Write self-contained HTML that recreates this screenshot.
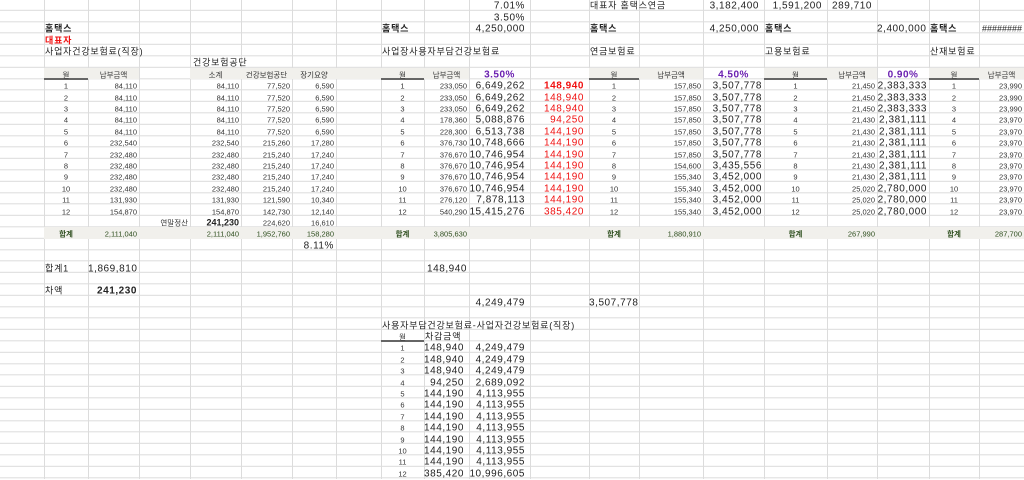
<!DOCTYPE html>
<html><head><meta charset="utf-8">
<style>
*{margin:0;padding:0;box-sizing:border-box}
body{width:1024px;height:479px;overflow:hidden;position:relative;background:#fff;
font-family:"Liberation Sans","Noto Sans CJK KR",sans-serif;color:#222;
background-image:repeating-linear-gradient(to bottom,transparent 0,transparent 10.4px,#dcdcdc 10.4px,#dcdcdc 11.4px);
background-position:0 -0.7px}
.v{position:absolute;top:0;height:479px;width:1px;background:#dcdcdc}
.g{position:absolute;height:11.4px;background:#f1f0ec}
.u{position:absolute;height:2px;background:#666}
i{font-style:normal;position:absolute;height:11.4px;line-height:11.4px;white-space:nowrap;font-size:10px;transform:translateY(1.5px)}
.r{text-align:right;padding-right:2px}
.rb{text-align:right;padding-right:5px}
.m{text-align:center}
.l{padding-left:1px}
.s{font-size:7.5px;color:#333}
.b{font-size:10px;letter-spacing:.55px;color:#222}
.red{color:#f01010}
.bold{font-weight:bold}
.grn{color:#2f4f1f}
.pur{color:#6a1fb0;font-weight:bold;font-size:10px;letter-spacing:.5px}
.k{font-size:9px;letter-spacing:.8px}
.c0{left:0;width:44px}.c1{left:44px;width:44px}.c2{left:88px;width:51px}.c3{left:139px;width:51px}
.c4{left:190px;width:51px}.c5{left:241px;width:51px}.c6{left:292px;width:44px}.c7{left:336px;width:45px}
.c8{left:381px;width:43px}.c9{left:424px;width:45px}.c10{left:469px;width:61px}.c11{left:530px;width:59px}
.c12{left:589px;width:50px}.c13{left:639px;width:64px}.c14{left:703px;width:61px}.c15{left:764px;width:63px}
.c16{left:827px;width:50px}.c17{left:877px;width:52px}.c18{left:929px;width:50px}.c19{left:979px;width:45px}
.y0{top:-0.7px}.y1{top:10.7px}.y2{top:22.1px}.y3{top:33.5px}.y4{top:44.9px}.y5{top:56.3px}.y6{top:67.7px}
.y7{top:79.1px}.y8{top:90.5px}.y9{top:101.9px}.y10{top:113.3px}.y11{top:124.7px}.y12{top:136.1px}
.y13{top:147.5px}.y14{top:158.9px}.y15{top:170.3px}.y16{top:181.7px}.y17{top:193.1px}.y18{top:204.5px}
.y19{top:215.9px}.y20{top:227.3px}.y21{top:238.7px}.y22{top:250.1px}.y23{top:261.5px}.y24{top:272.9px}
.y25{top:284.3px}.y26{top:295.7px}.y27{top:307.1px}.y28{top:318.5px}.y29{top:329.9px}.y30{top:341.3px}
.y31{top:352.7px}.y32{top:364.1px}.y33{top:375.5px}.y34{top:386.9px}.y35{top:398.3px}.y36{top:409.7px}
.y37{top:421.1px}.y38{top:432.5px}.y39{top:443.9px}.y40{top:455.3px}.y41{top:466.7px}
div.y6,div.y20{transform:none}
</style></head><body>
<div class="v" style="left:44px"></div><div class="v" style="left:88px"></div><div class="v" style="left:139px"></div>
<div class="v" style="left:190px"></div><div class="v" style="left:241px"></div><div class="v" style="left:292px"></div>
<div class="v" style="left:336px"></div><div class="v" style="left:381px"></div><div class="v" style="left:424px"></div>
<div class="v" style="left:469px"></div><div class="v" style="left:530px"></div><div class="v" style="left:589px"></div>
<div class="v" style="left:639px"></div><div class="v" style="left:703px"></div><div class="v" style="left:764px"></div>
<div class="v" style="left:827px"></div><div class="v" style="left:877px"></div><div class="v" style="left:929px"></div>
<div class="v" style="left:979px"></div>

<div class="g y6" style="left:44px;width:95px"></div>
<div class="g y6" style="left:190px;width:279px"></div>
<div class="g y6" style="left:589px;width:114px"></div>
<div class="g y6" style="left:764px;width:113px"></div>
<div class="g y6" style="left:929px;width:95px"></div>
<div class="g y20" style="left:44px;width:980px"></div>
<div class="u" style="top:77.5px;left:44px;width:44px"></div>
<div class="u" style="top:77.5px;left:381px;width:43px"></div>
<div class="u" style="top:77.5px;left:589px;width:50px"></div>
<div class="u" style="top:77.5px;left:764px;width:63px"></div>
<div class="u" style="top:77.5px;left:929px;width:50px"></div>
<div class="u" style="top:339.5px;left:381px;width:43px"></div>

<i class="c10 y0 rb b">7.01%</i>
<i class="c12 y0 l k">대표자 홈택스연금</i>
<i class="c14 y0 rb b">3,182,400</i>
<i class="c15 y0 rb b">1,591,200</i>
<i class="c16 y0 rb b">289,710</i>
<i class="c10 y1 rb b">3.50%</i>
<i class="c1 y2 l k bold">홈택스</i>
<i class="c8 y2 l k bold">홈택스</i>
<i class="c10 y2 rb b">4,250,000</i>
<i class="c12 y2 l k bold">홈택스</i>
<i class="c14 y2 rb b">4,250,000</i>
<i class="c15 y2 l k bold">홈택스</i>
<i class="c17 y2 rb b">2,400,000</i>
<i class="c18 y2 l k bold">홈택스</i>
<i class="c19 y2 r" style="font-size:9px">########</i>
<i class="c1 y3 l k bold red">대표자</i>
<i class="c1 y4 l k">사업자건강보험료(직장)</i>
<i class="c8 y4 l k">사업장사용자부담건강보험료</i>
<i class="c12 y4 l k">연금보험료</i>
<i class="c15 y4 l k">고용보험료</i>
<i class="c18 y4 l k">산재보험료</i>
<i class="c4 y5 l k" style="left:192px">건강보험공단</i>

<i class="c1 y6 m s">월</i><i class="c2 y6 m s">납부금액</i><i class="c4 y6 m s">소계</i><i class="c5 y6 m s">건강보험공단</i><i class="c6 y6 m s">장기요양</i>
<i class="c8 y6 m s">월</i><i class="c9 y6 m s">납부금액</i><i class="c10 y6 m pur">3.50%</i>
<i class="c12 y6 m s">월</i><i class="c13 y6 m s">납부금액</i><i class="c14 y6 m pur">4.50%</i>
<i class="c15 y6 m s">월</i><i class="c16 y6 m s">납부금액</i><i class="c17 y6 m pur">0.90%</i>
<i class="c18 y6 m s">월</i><i class="c19 y6 m s">납부금액</i>

<i class="c1 y7 m s">1</i><i class="c2 y7 r s">84,110</i><i class="c4 y7 r s">84,110</i><i class="c5 y7 r s">77,520</i><i class="c6 y7 r s">6,590</i>
<i class="c1 y8 m s">2</i><i class="c2 y8 r s">84,110</i><i class="c4 y8 r s">84,110</i><i class="c5 y8 r s">77,520</i><i class="c6 y8 r s">6,590</i>
<i class="c1 y9 m s">3</i><i class="c2 y9 r s">84,110</i><i class="c4 y9 r s">84,110</i><i class="c5 y9 r s">77,520</i><i class="c6 y9 r s">6,590</i>
<i class="c1 y10 m s">4</i><i class="c2 y10 r s">84,110</i><i class="c4 y10 r s">84,110</i><i class="c5 y10 r s">77,520</i><i class="c6 y10 r s">6,590</i>
<i class="c1 y11 m s">5</i><i class="c2 y11 r s">84,110</i><i class="c4 y11 r s">84,110</i><i class="c5 y11 r s">77,520</i><i class="c6 y11 r s">6,590</i>
<i class="c1 y12 m s">6</i><i class="c2 y12 r s">232,540</i><i class="c4 y12 r s">232,540</i><i class="c5 y12 r s">215,260</i><i class="c6 y12 r s">17,280</i>
<i class="c1 y13 m s">7</i><i class="c2 y13 r s">232,480</i><i class="c4 y13 r s">232,480</i><i class="c5 y13 r s">215,240</i><i class="c6 y13 r s">17,240</i>
<i class="c1 y14 m s">8</i><i class="c2 y14 r s">232,480</i><i class="c4 y14 r s">232,480</i><i class="c5 y14 r s">215,240</i><i class="c6 y14 r s">17,240</i>
<i class="c1 y15 m s">9</i><i class="c2 y15 r s">232,480</i><i class="c4 y15 r s">232,480</i><i class="c5 y15 r s">215,240</i><i class="c6 y15 r s">17,240</i>
<i class="c1 y16 m s">10</i><i class="c2 y16 r s">232,480</i><i class="c4 y16 r s">232,480</i><i class="c5 y16 r s">215,240</i><i class="c6 y16 r s">17,240</i>
<i class="c1 y17 m s">11</i><i class="c2 y17 r s">131,930</i><i class="c4 y17 r s">131,930</i><i class="c5 y17 r s">121,590</i><i class="c6 y17 r s">10,340</i>
<i class="c1 y18 m s">12</i><i class="c2 y18 r s">154,870</i><i class="c4 y18 r s">154,870</i><i class="c5 y18 r s">142,730</i><i class="c6 y18 r s">12,140</i>
<i class="c3 y19 r s">연말정산</i><i class="c4 y19 r bold" style="font-size:9px">241,230</i><i class="c5 y19 r s">224,620</i><i class="c6 y19 r s">16,610</i>
<i class="c1 y20 m s grn bold">합계</i><i class="c2 y20 r s grn">2,111,040</i><i class="c4 y20 r s grn">2,111,040</i><i class="c5 y20 r s grn">1,952,760</i><i class="c6 y20 r s grn">158,280</i>
<i class="c6 y21 r b">8.11%</i>
<i class="c1 y23 l k">합계1</i><i class="c2 y23 r b">1,869,810</i>
<i class="c1 y25 l k">차액</i><i class="c2 y25 r b bold">241,230</i>

<i class="c8 y7 m s">1</i><i class="c9 y7 r s">233,050</i><i class="c10 y7 rb b">6,649,262</i><i class="c11 y7 rb b red bold">148,940</i>
<i class="c8 y8 m s">2</i><i class="c9 y8 r s">233,050</i><i class="c10 y8 rb b">6,649,262</i><i class="c11 y8 rb b red">148,940</i>
<i class="c8 y9 m s">3</i><i class="c9 y9 r s">233,050</i><i class="c10 y9 rb b">6,649,262</i><i class="c11 y9 rb b red">148,940</i>
<i class="c8 y10 m s">4</i><i class="c9 y10 r s">178,360</i><i class="c10 y10 rb b">5,088,876</i><i class="c11 y10 rb b red">94,250</i>
<i class="c8 y11 m s">5</i><i class="c9 y11 r s">228,300</i><i class="c10 y11 rb b">6,513,738</i><i class="c11 y11 rb b red">144,190</i>
<i class="c8 y12 m s">6</i><i class="c9 y12 r s">376,730</i><i class="c10 y12 rb b">10,748,666</i><i class="c11 y12 rb b red">144,190</i>
<i class="c8 y13 m s">7</i><i class="c9 y13 r s">376,670</i><i class="c10 y13 rb b">10,746,954</i><i class="c11 y13 rb b red">144,190</i>
<i class="c8 y14 m s">8</i><i class="c9 y14 r s">376,670</i><i class="c10 y14 rb b">10,746,954</i><i class="c11 y14 rb b red">144,190</i>
<i class="c8 y15 m s">9</i><i class="c9 y15 r s">376,670</i><i class="c10 y15 rb b">10,746,954</i><i class="c11 y15 rb b red">144,190</i>
<i class="c8 y16 m s">10</i><i class="c9 y16 r s">376,670</i><i class="c10 y16 rb b">10,746,954</i><i class="c11 y16 rb b red">144,190</i>
<i class="c8 y17 m s">11</i><i class="c9 y17 r s">276,120</i><i class="c10 y17 rb b">7,878,113</i><i class="c11 y17 rb b red">144,190</i>
<i class="c8 y18 m s">12</i><i class="c9 y18 r s">540,290</i><i class="c10 y18 rb b">15,415,276</i><i class="c11 y18 rb b red">385,420</i>
<i class="c8 y20 m s grn bold">합계</i><i class="c9 y20 r s grn">3,805,630</i>
<i class="c9 y23 r b">148,940</i>
<i class="c10 y26 rb b">4,249,479</i>
<i class="c12 y26 r b">3,507,778</i>
<i class="c8 y28 l k">사용자부담건강보험료-사업자건강보험료(직장)</i>
<i class="c8 y29 m s">월</i><i class="c9 y29 l k">차감금액</i>
<i class="c8 y30 m s">1</i><i class="c9 y30 rb b">148,940</i><i class="c10 y30 rb b">4,249,479</i>
<i class="c8 y31 m s">2</i><i class="c9 y31 rb b">148,940</i><i class="c10 y31 rb b">4,249,479</i>
<i class="c8 y32 m s">3</i><i class="c9 y32 rb b">148,940</i><i class="c10 y32 rb b">4,249,479</i>
<i class="c8 y33 m s">4</i><i class="c9 y33 rb b">94,250</i><i class="c10 y33 rb b">2,689,092</i>
<i class="c8 y34 m s">5</i><i class="c9 y34 rb b">144,190</i><i class="c10 y34 rb b">4,113,955</i>
<i class="c8 y35 m s">6</i><i class="c9 y35 rb b">144,190</i><i class="c10 y35 rb b">4,113,955</i>
<i class="c8 y36 m s">7</i><i class="c9 y36 rb b">144,190</i><i class="c10 y36 rb b">4,113,955</i>
<i class="c8 y37 m s">8</i><i class="c9 y37 rb b">144,190</i><i class="c10 y37 rb b">4,113,955</i>
<i class="c8 y38 m s">9</i><i class="c9 y38 rb b">144,190</i><i class="c10 y38 rb b">4,113,955</i>
<i class="c8 y39 m s">10</i><i class="c9 y39 rb b">144,190</i><i class="c10 y39 rb b">4,113,955</i>
<i class="c8 y40 m s">11</i><i class="c9 y40 rb b">144,190</i><i class="c10 y40 rb b">4,113,955</i>
<i class="c8 y41 m s">12</i><i class="c9 y41 rb b">385,420</i><i class="c10 y41 rb b">10,996,605</i>

<i class="c12 y7 m s">1</i><i class="c13 y7 r s">157,850</i><i class="c14 y7 r b">3,507,778</i>
<i class="c12 y8 m s">2</i><i class="c13 y8 r s">157,850</i><i class="c14 y8 r b">3,507,778</i>
<i class="c12 y9 m s">3</i><i class="c13 y9 r s">157,850</i><i class="c14 y9 r b">3,507,778</i>
<i class="c12 y10 m s">4</i><i class="c13 y10 r s">157,850</i><i class="c14 y10 r b">3,507,778</i>
<i class="c12 y11 m s">5</i><i class="c13 y11 r s">157,850</i><i class="c14 y11 r b">3,507,778</i>
<i class="c12 y12 m s">6</i><i class="c13 y12 r s">157,850</i><i class="c14 y12 r b">3,507,778</i>
<i class="c12 y13 m s">7</i><i class="c13 y13 r s">157,850</i><i class="c14 y13 r b">3,507,778</i>
<i class="c12 y14 m s">8</i><i class="c13 y14 r s">154,600</i><i class="c14 y14 r b">3,435,556</i>
<i class="c12 y15 m s">9</i><i class="c13 y15 r s">155,340</i><i class="c14 y15 r b">3,452,000</i>
<i class="c12 y16 m s">10</i><i class="c13 y16 r s">155,340</i><i class="c14 y16 r b">3,452,000</i>
<i class="c12 y17 m s">11</i><i class="c13 y17 r s">155,340</i><i class="c14 y17 r b">3,452,000</i>
<i class="c12 y18 m s">12</i><i class="c13 y18 r s">155,340</i><i class="c14 y18 r b">3,452,000</i>
<i class="c12 y20 m s grn bold">합계</i><i class="c13 y20 r s grn">1,880,910</i>

<i class="c15 y7 m s">1</i><i class="c16 y7 r s">21,450</i><i class="c17 y7 r b">2,383,333</i>
<i class="c15 y8 m s">2</i><i class="c16 y8 r s">21,450</i><i class="c17 y8 r b">2,383,333</i>
<i class="c15 y9 m s">3</i><i class="c16 y9 r s">21,450</i><i class="c17 y9 r b">2,383,333</i>
<i class="c15 y10 m s">4</i><i class="c16 y10 r s">21,430</i><i class="c17 y10 r b">2,381,111</i>
<i class="c15 y11 m s">5</i><i class="c16 y11 r s">21,430</i><i class="c17 y11 r b">2,381,111</i>
<i class="c15 y12 m s">6</i><i class="c16 y12 r s">21,430</i><i class="c17 y12 r b">2,381,111</i>
<i class="c15 y13 m s">7</i><i class="c16 y13 r s">21,430</i><i class="c17 y13 r b">2,381,111</i>
<i class="c15 y14 m s">8</i><i class="c16 y14 r s">21,430</i><i class="c17 y14 r b">2,381,111</i>
<i class="c15 y15 m s">9</i><i class="c16 y15 r s">21,430</i><i class="c17 y15 r b">2,381,111</i>
<i class="c15 y16 m s">10</i><i class="c16 y16 r s">25,020</i><i class="c17 y16 r b">2,780,000</i>
<i class="c15 y17 m s">11</i><i class="c16 y17 r s">25,020</i><i class="c17 y17 r b">2,780,000</i>
<i class="c15 y18 m s">12</i><i class="c16 y18 r s">25,020</i><i class="c17 y18 r b">2,780,000</i>
<i class="c15 y20 m s grn bold">합계</i><i class="c16 y20 r s grn">267,990</i>

<i class="c18 y7 m s">1</i><i class="c19 y7 r s">23,990</i>
<i class="c18 y8 m s">2</i><i class="c19 y8 r s">23,990</i>
<i class="c18 y9 m s">3</i><i class="c19 y9 r s">23,990</i>
<i class="c18 y10 m s">4</i><i class="c19 y10 r s">23,970</i>
<i class="c18 y11 m s">5</i><i class="c19 y11 r s">23,970</i>
<i class="c18 y12 m s">6</i><i class="c19 y12 r s">23,970</i>
<i class="c18 y13 m s">7</i><i class="c19 y13 r s">23,970</i>
<i class="c18 y14 m s">8</i><i class="c19 y14 r s">23,970</i>
<i class="c18 y15 m s">9</i><i class="c19 y15 r s">23,970</i>
<i class="c18 y16 m s">10</i><i class="c19 y16 r s">23,970</i>
<i class="c18 y17 m s">11</i><i class="c19 y17 r s">23,970</i>
<i class="c18 y18 m s">12</i><i class="c19 y18 r s">23,970</i>
<i class="c18 y20 m s grn bold">합계</i><i class="c19 y20 r s grn">287,700</i>
</body></html>
